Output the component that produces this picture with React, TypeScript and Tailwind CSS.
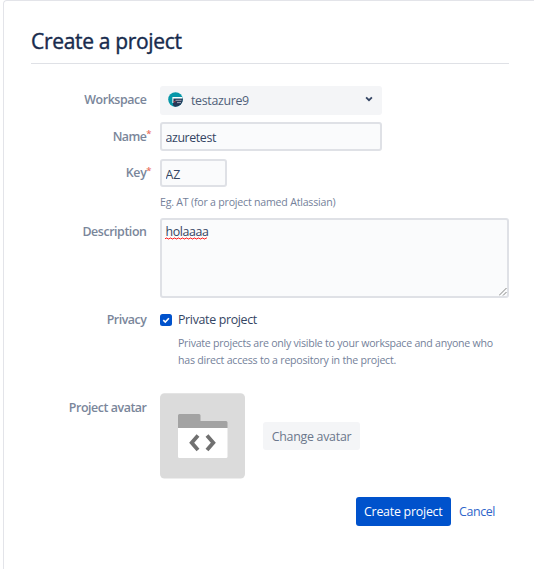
import type { ReactNode } from "react";

type RowProps = {
  label: string;
  required?: boolean;
  className: string;
  labelClassName: string;
  labelOffset: string;
  children: ReactNode;
};

function Row({ label, required, className, labelClassName, labelOffset, children }: RowProps) {
  return (
    <div className={`flex items-start ${className}`}>
      <div
        className={`relative mr-[13.5px] flex w-[115.5px] shrink-0 justify-end whitespace-nowrap text-[12.4px] font-semibold leading-4 text-[#7a869a] ${labelOffset}`}
      >
        <span className={labelClassName}>{label}</span>
        {required && (
          <span className="absolute -right-[5px] top-[3.5px] text-[9.5px] font-semibold text-[#e9705f]">*</span>
        )}
      </div>
      {children}
    </div>
  );
}

function WorkspaceLogo() {
  return (
    <svg width="15" height="15" viewBox="0 0 15 15" className="-mt-0.5 shrink-0">
      <circle cx="7.5" cy="7.5" r="7.3" fill="#0797a8" />
      <path d="M5 6.2h9.6a7.3 7.3 0 0 1-7.600 8.600Q5 14.500 5 12.500z" fill="#253858" />
      <path d="M4.400 5h10v1.400H5.400V11h-1z" fill="#fff" />
      <path d="M7.500 8.300h6M9 10.600h4" stroke="#c1c7d0" strokeWidth="0.800" />
      <path d="M5.800 9h1.700v1.300H5.800z" fill="#a33b45" />
    </svg>
  );
}

function FolderAvatar() {
  return (
    <svg width="85" height="86" viewBox="0 0 85 86" className="shrink-0">
      <rect y="0.300" width="85" height="85.300" rx="4.500" fill="#dbdbdb" />
      <path d="M18 35V22.500A1.500 1.500 0 0 1 19.500 21H39a1.500 1.500 0 0 1 1.500 1.500V28H66a1.500 1.500 0 0 1 1.500 1.500V35z" fill="#a3a3a3" />
      <path d="M18 35h49.500v28.500A1.500 1.500 0 0 1 66 65H19.500A1.500 1.500 0 0 1 18 63.500z" fill="#fff" />
      <path d="M38 42.500l-6.300 7.200 6.300 7.200M47 42.500l6.300 7.200L47 56.900" fill="none" stroke="#707070" strokeWidth="3.800" />
    </svg>
  );
}

const field =
  "box-border rounded-[3px] border-2 border-[#dfe1e6] bg-[#fafbfc] px-[3.5px] text-[12.4px] text-[#344563] outline-none";

export default function App() {
  return (
    <div className="h-[569px] w-[534px] overflow-hidden bg-white pl-[3px] font-['Open_Sans','Noto_Sans',sans-serif]">
      <main className="h-[580px] w-[540px] rounded-tl-[4px] border-l border-t border-[#e3e4e9] pl-[27px]">
        <div className="w-[478px]">
          <h1 className="h-[63px] border-b border-[#dfe1e6] pt-[26px] text-[21px] font-normal leading-[29px] text-[#172b4d] [-webkit-text-stroke:0.4px_#172b4d]">
            <span className="tracking-[-0.32px]">Create a project</span>
          </h1>

          <Row label="Workspace" className="mt-[22px]" labelOffset="pt-[6px]" labelClassName="tracking-[-0.42px]">
            <button className="flex h-[29px] w-[222px] items-center rounded-[3px] bg-[#f4f5f7] pl-[8px] pr-[9px] text-[12.4px] text-[#505f79]">
              <WorkspaceLogo />
              <span className="ml-2 pt-px tracking-[-0.33px]">testazure9</span>
              <svg width="8" height="6" viewBox="0 0 8 6" className="-mt-[3px] ml-auto">
                <path d="M1.100 1.400 4 4.200l2.900-2.800" fill="none" stroke="#344563" strokeWidth="1.800" />
              </svg>
            </button>
          </Row>

          <Row label="Name" required className="mt-[7px]" labelOffset="pt-[6.5px]" labelClassName="tracking-[-0.5px]">
            <input className={`${field} h-[29px] w-[222px] pt-[2px] tracking-[-0.4px]`} defaultValue="azuretest" spellCheck={false} />
          </Row>

          <Row label="Key" required className="mt-[8px]" labelOffset="pt-[6px]" labelClassName="tracking-[-0.3px]">
            <div>
              <input className={`${field} block h-[28px] w-[67px] pt-[2px]`} defaultValue="AZ" />
              <p className="mt-[7px] h-4 whitespace-nowrap text-[10.6px] leading-4 text-[#74819a]">
                <span className="tracking-[-0.21px]">Eg. AT (for a project named Atlassian)</span>
              </p>
            </div>
          </Row>

          <Row label="Description" className="mt-[8px]" labelOffset="pt-[6px]" labelClassName="tracking-[-0.42px]">
            <div className={`${field} relative h-[80px] w-[350px] pt-[4px] leading-4`}>
              <span className="tracking-[-0.4px]">holaaaa</span>
              <svg width="43" height="3" viewBox="0 0 43 3" className="absolute left-[3px] top-[17px]">
                <path
                  d="M0 2l1-1h1l1 1h1l1-1h1l1 1h1l1-1h1l1 1h1l1-1h1l1 1h1l1-1h1l1 1h1l1-1h1l1 1h1l1-1h1l1 1h1l1-1h1l1 1h1l1-1h1l1 1h1l1-1h1l1 1h1l1-1h1"
                  fill="none"
                  stroke="#f22"
                />
              </svg>
              <svg width="8" height="8" viewBox="0 0 8 8" className="absolute bottom-0 right-0">
                <path d="M0 7.500 7.500 0M4 7.500 7.500 4" stroke="#777" strokeWidth="0.900" />
              </svg>
            </div>
          </Row>

          <Row label="Privacy" className="mt-[14px]" labelOffset="" labelClassName="tracking-[-0.45px]">
            <div>
              <div className="flex h-4 items-center text-[12.4px] text-[#344563]">
                <svg width="12" height="12" viewBox="0 0 12 12">
                  <rect width="12" height="12" rx="2.500" fill="#0052cc" />
                  <path d="m3.300 6.100 2 2 3.600-3.800" fill="none" stroke="#fff" strokeWidth="1.600" />
                </svg>
                <span className="ml-[6px] whitespace-nowrap pt-px tracking-[-0.33px]">Private project</span>
              </div>
              <p className="ml-[18px] mt-[7px] whitespace-nowrap text-[10.6px] leading-[17.4px] text-[#74819a]">
                <span className="tracking-[-0.25px]">Private projects are only visible to your workspace and anyone who</span>
                <br />
                <span className="tracking-[-0.23px]">has direct access to a repository in the project.</span>
              </p>
            </div>
          </Row>

          <Row label="Project avatar" className="mt-[23.6px]" labelOffset="pt-[7px]" labelClassName="tracking-[-0.44px]">
            <FolderAvatar />
            <button className="ml-[18px] mt-[29px] h-[28px] w-[97px] whitespace-nowrap rounded-[3px] bg-[#f4f5f7] pt-px text-[12.4px] text-[#6b778c]">
              <span className="tracking-[-0.27px]">Change avatar</span>
            </button>
          </Row>

          <div className="mt-[18px] flex items-center pl-[324.5px] text-[12.4px]">
            <button className="h-[29px] w-[95.5px] whitespace-nowrap rounded-[3px] bg-[#0052cc] pt-px text-white">
              <span className="tracking-[-0.24px]">Create project</span>
            </button>
            <a className="ml-2 pt-px text-[#2f65ca]">
              <span className="tracking-[-0.38px]">Cancel</span>
            </a>
          </div>
        </div>
      </main>
    </div>
  );
}
